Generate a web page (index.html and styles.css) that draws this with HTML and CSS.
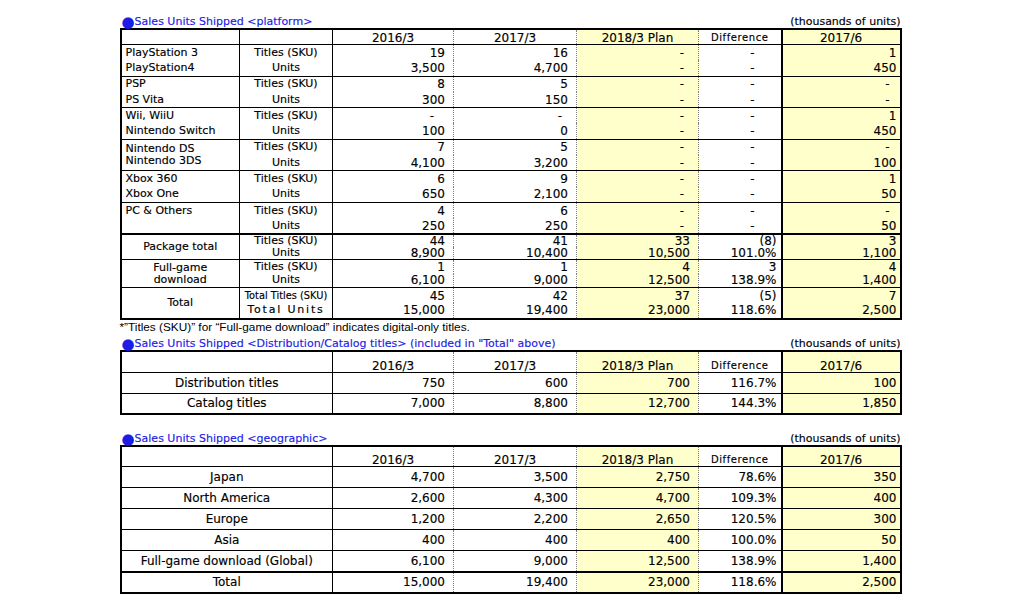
FILE: index.html
```html
<!DOCTYPE html>
<html lang="en">
<head>
    <meta charset="UTF-8">
    <meta name="viewport" content="width=device-width, initial-scale=1.0">
    <title>Sales Units Shipped</title>
    <link rel="stylesheet" href="styles.css">
</head>
<body>
<main class="page">

    <!-- Platform -->
    <div class="heading">
        <span class="title"><span class="dot">●</span>Sales Units Shipped &lt;platform&gt;</span>
        <span class="unit">(thousands of units)</span>
    </div>
    <table class="sheet platform">
        <colgroup>
            <col class="c-name"><col class="c-label"><col class="c-num"><col class="c-num2"><col class="c-plan"><col class="c-diff"><col class="c-q1">
        </colgroup>
        <thead>
            <tr><th class="name"></th><th class="label"></th><th class="y16">2016/3</th><th class="y17">2017/3</th><th class="plan">2018/3 Plan</th><th class="diff small">Difference</th><th class="q1">2017/6</th></tr>
        </thead>
        <tbody class="grp">
            <tr><td class="name">PlayStation 3</td><td class="label">Titles (SKU)</td><td class="y16">19</td><td class="y17">16</td><td class="plan"><span class="nil">-</span></td><td class="diff"><span class="nil">-</span></td><td class="q1">1</td></tr>
            <tr><td class="name">PlayStation4</td><td class="label">Units</td><td class="y16">3,500</td><td class="y17">4,700</td><td class="plan"><span class="nil">-</span></td><td class="diff"><span class="nil">-</span></td><td class="q1">450</td></tr>
        </tbody>
        <tbody class="grp">
            <tr><td class="name">PSP</td><td class="label">Titles (SKU)</td><td class="y16">8</td><td class="y17">5</td><td class="plan"><span class="nil">-</span></td><td class="diff"><span class="nil">-</span></td><td class="q1"><span class="nil">-</span></td></tr>
            <tr><td class="name">PS Vita</td><td class="label">Units</td><td class="y16">300</td><td class="y17">150</td><td class="plan"><span class="nil">-</span></td><td class="diff"><span class="nil">-</span></td><td class="q1"><span class="nil">-</span></td></tr>
        </tbody>
        <tbody class="grp">
            <tr><td class="name">Wii, WiiU</td><td class="label">Titles (SKU)</td><td class="y16"><span class="nil">-</span></td><td class="y17"><span class="nil">-</span></td><td class="plan"><span class="nil">-</span></td><td class="diff"><span class="nil">-</span></td><td class="q1">1</td></tr>
            <tr><td class="name">Nintendo Switch</td><td class="label">Units</td><td class="y16">100</td><td class="y17">0</td><td class="plan"><span class="nil">-</span></td><td class="diff"><span class="nil">-</span></td><td class="q1">450</td></tr>
        </tbody>
        <tbody class="grp">
            <tr><td class="name low">Nintendo DS</td><td class="label">Titles (SKU)</td><td class="y16">7</td><td class="y17">5</td><td class="plan"><span class="nil">-</span></td><td class="diff"><span class="nil">-</span></td><td class="q1"><span class="nil">-</span></td></tr>
            <tr><td class="name high">Nintendo 3DS</td><td class="label">Units</td><td class="y16">4,100</td><td class="y17">3,200</td><td class="plan"><span class="nil">-</span></td><td class="diff"><span class="nil">-</span></td><td class="q1">100</td></tr>
        </tbody>
        <tbody class="grp">
            <tr><td class="name">Xbox 360</td><td class="label">Titles (SKU)</td><td class="y16">6</td><td class="y17">9</td><td class="plan"><span class="nil">-</span></td><td class="diff"><span class="nil">-</span></td><td class="q1">1</td></tr>
            <tr><td class="name">Xbox One</td><td class="label">Units</td><td class="y16">650</td><td class="y17">2,100</td><td class="plan"><span class="nil">-</span></td><td class="diff"><span class="nil">-</span></td><td class="q1">50</td></tr>
        </tbody>
        <tbody class="grp">
            <tr><td class="name">PC &amp; Others</td><td class="label">Titles (SKU)</td><td class="y16">4</td><td class="y17">6</td><td class="plan"><span class="nil">-</span></td><td class="diff"><span class="nil">-</span></td><td class="q1"><span class="nil">-</span></td></tr>
            <tr><td class="name"></td><td class="label">Units</td><td class="y16">250</td><td class="y17">250</td><td class="plan"><span class="nil">-</span></td><td class="diff"><span class="nil">-</span></td><td class="q1">50</td></tr>
        </tbody>
        <tbody class="sum pkg">
            <tr><td class="name mid" rowspan="2">Package total</td><td class="label">Titles (SKU)</td><td class="y16">44</td><td class="y17">41</td><td class="plan">33</td><td class="diff">(8)</td><td class="q1">3</td></tr>
            <tr><td class="label">Units</td><td class="y16">8,900</td><td class="y17">10,400</td><td class="plan">10,500</td><td class="diff">101.0%</td><td class="q1">1,100</td></tr>
        </tbody>
        <tbody class="sum dl">
            <tr><td class="name mid" rowspan="2">Full-game<br>download</td><td class="label">Titles (SKU)</td><td class="y16">1</td><td class="y17">1</td><td class="plan">4</td><td class="diff">3</td><td class="q1">4</td></tr>
            <tr><td class="label">Units</td><td class="y16">6,100</td><td class="y17">9,000</td><td class="plan">12,500</td><td class="diff">138.9%</td><td class="q1">1,400</td></tr>
        </tbody>
        <tbody class="sum tot">
            <tr><td class="name mid" rowspan="2">Total</td><td class="label tiny">Total Titles (SKU)</td><td class="y16">45</td><td class="y17">42</td><td class="plan">37</td><td class="diff">(5)</td><td class="q1">7</td></tr>
            <tr><td class="label spread">Total Units</td><td class="y16">15,000</td><td class="y17">19,400</td><td class="plan">23,000</td><td class="diff">118.6%</td><td class="q1">2,500</td></tr>
        </tbody>
    </table>
    <p class="note">*”Titles (SKU)” for “Full-game download” indicates digital-only titles.</p>

    <!-- Distribution / Catalog -->
    <div class="heading">
        <span class="title"><span class="dot">●</span>Sales Units Shipped &lt;Distribution/Catalog titles&gt; (included in "Total" above)</span>
        <span class="unit">(thousands of units)</span>
    </div>
    <table class="sheet wide catalog">
        <colgroup>
            <col class="c-wide"><col class="c-num"><col class="c-num2"><col class="c-plan"><col class="c-diff"><col class="c-q1">
        </colgroup>
        <thead>
            <tr><th class="name"></th><th class="y16">2016/3</th><th class="y17">2017/3</th><th class="plan">2018/3 Plan</th><th class="diff small">Difference</th><th class="q1">2017/6</th></tr>
        </thead>
        <tbody>
            <tr><td class="name">Distribution titles</td><td class="y16">750</td><td class="y17">600</td><td class="plan">700</td><td class="diff">116.7%</td><td class="q1">100</td></tr>
            <tr><td class="name">Catalog titles</td><td class="y16">7,000</td><td class="y17">8,800</td><td class="plan">12,700</td><td class="diff">144.3%</td><td class="q1">1,850</td></tr>
        </tbody>
    </table>

    <!-- Geographic -->
    <div class="heading gap">
        <span class="title"><span class="dot">●</span>Sales Units Shipped &lt;geographic&gt;</span>
        <span class="unit">(thousands of units)</span>
    </div>
    <table class="sheet wide geo">
        <colgroup>
            <col class="c-wide"><col class="c-num"><col class="c-num2"><col class="c-plan"><col class="c-diff"><col class="c-q1">
        </colgroup>
        <thead>
            <tr><th class="name"></th><th class="y16">2016/3</th><th class="y17">2017/3</th><th class="plan">2018/3 Plan</th><th class="diff small">Difference</th><th class="q1">2017/6</th></tr>
        </thead>
        <tbody>
            <tr><td class="name">Japan</td><td class="y16">4,700</td><td class="y17">3,500</td><td class="plan">2,750</td><td class="diff">78.6%</td><td class="q1">350</td></tr>
            <tr><td class="name">North America</td><td class="y16">2,600</td><td class="y17">4,300</td><td class="plan">4,700</td><td class="diff">109.3%</td><td class="q1">400</td></tr>
            <tr><td class="name">Europe</td><td class="y16">1,200</td><td class="y17">2,200</td><td class="plan">2,650</td><td class="diff">120.5%</td><td class="q1">300</td></tr>
            <tr><td class="name">Asia</td><td class="y16">400</td><td class="y17">400</td><td class="plan">400</td><td class="diff">100.0%</td><td class="q1">50</td></tr>
            <tr><td class="name">Full-game download (Global)</td><td class="y16">6,100</td><td class="y17">9,000</td><td class="plan">12,500</td><td class="diff">138.9%</td><td class="q1">1,400</td></tr>
            <tr class="last"><td class="name">Total</td><td class="y16">15,000</td><td class="y17">19,400</td><td class="plan">23,000</td><td class="diff">118.6%</td><td class="q1">2,500</td></tr>
        </tbody>
    </table>

</main>
</body>
</html>
```

FILE: styles.css
```css
body {
    margin: 0;
    background: #fff;
    color: #000;
    font-family: "DejaVu Sans", Verdana, sans-serif;
    -webkit-text-stroke: 0.15px;
}
.page {
    width: 782px;
    margin: 0 auto;
    padding-top: 16px;
}
/* section headings */
.heading {
    display: flex;
    justify-content: space-between;
    align-items: center;
    height: 12px;
    font-size: 11px;
    line-height: 12px;
    padding: 0 1px 0 2px;
}
.heading.gap {
    margin-top: 18px;
}
.title {
    color: #1c1ce6;
}
.dot {
    font-size: 15px;
    line-height: 12px;
    vertical-align: top;
}
.note {
    margin: 0 0 4px;
    height: 14px;
    line-height: 14px;
    font-family: "Liberation Sans", Arial, sans-serif;
    font-size: 11.8px;
    -webkit-text-stroke: 0;
}
/* tables */
.sheet {
    width: 782px;
    border-collapse: collapse;
    table-layout: fixed;
    border: 2px solid #000;
    font-size: 12px;
}
.sheet th, .sheet td {
    padding: 0;
    white-space: nowrap;
    line-height: 12px;
    font-weight: normal;
}
.sheet th {
    text-align: center;
    vertical-align: bottom;
    border-bottom: 1px solid #000;
    height: 14px;
}
col.c-name { width: 119px; }
col.c-label { width: 93px; }
col.c-wide { width: 212px; }
col.c-num { width: 121px; }
col.c-num2 { width: 123px; }
col.c-plan { width: 122px; }
col.c-diff { width: 83px; }
col.c-q1 { width: 119px; }

.name {
    text-align: left;
    padding-left: 4px !important;
    font-size: 11px;
    border-right: 1px solid #000;
}
.label {
    text-align: center;
    font-size: 11px;
    border-right: 1px solid #000;
}
td.y16, td.y17, td.plan {
    text-align: right;
    padding-right: 8px;
}
.y17, .plan, .diff {
    border-left: 1px dotted #808080;
}
td.diff {
    text-align: right;
    padding-right: 4px;
}
.plan, .q1 {
    background: #ffffcc;
}
.q1 {
    border-left: 2px solid #000;
}
td.q1 {
    text-align: right;
    padding-right: 3px;
}
.small {
    font-size: 10px;
    letter-spacing: 0.6px;
}
.tiny {
    font-size: 9.8px;
}
.spread {
    letter-spacing: 1.8px;
}
/* dash placeholders, Excel style */
.nil {
    display: inline-block;
    padding-right: 6px;
}
td.y16 .nil { padding-right: 11px; }
td.diff .nil { padding-right: 22px; }
td.q1 .nil { padding-right: 7px; }

/* platform table */
.platform tbody.grp {
    border-bottom: 1px solid #000;
}
.platform tbody.grp tr {
    height: 15.8px;
}
.platform .mid {
    text-align: center;
    padding-left: 0 !important;
    vertical-align: middle;
}
.platform tbody.pkg {
    border-top: 2px solid #000;
    border-bottom: 1px solid #000;
}
.platform tbody.pkg tr { height: 12.5px; }
.platform tbody.dl {
    border-bottom: 1px solid #000;
}
.platform tbody.dl tr { height: 14px; }
.platform tbody.tot tr { height: 15.5px; }
.platform .low { vertical-align: bottom; }
.platform .high { vertical-align: top; }

/* wide tables */
.wide .name {
    text-align: center;
    padding-left: 0 !important;
    font-size: 12px;
}
.wide tbody tr {
    height: 21px;
}
.wide tbody td {
    border-bottom: 1px solid #000;
}
.catalog th {
    height: 20px;
}
.geo th {
    height: 19px;
}
.geo tr.last td {
    border-top: 2px solid #000;
}
```
